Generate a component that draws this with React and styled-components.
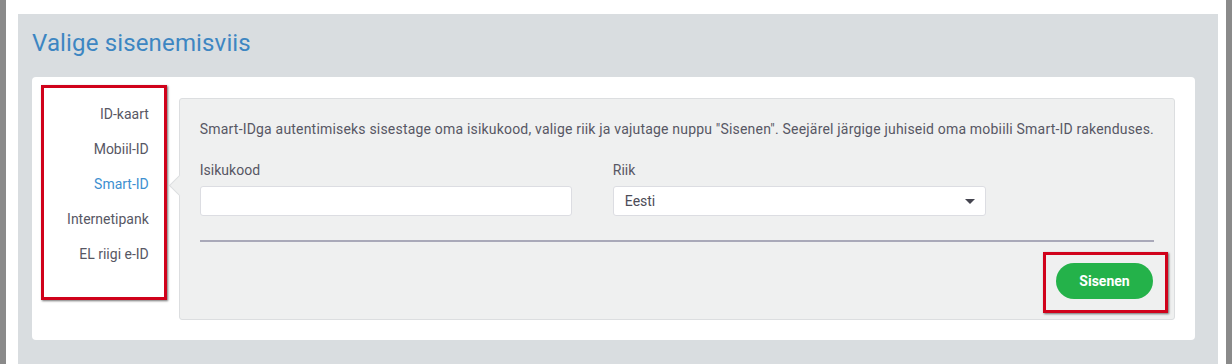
import React, { useState } from 'react'
import styled, { createGlobalStyle } from 'styled-components'

const GlobalStyle = createGlobalStyle`
  html, body {
    margin: 0;
    padding: 0;
    background: #ffffff;
  }
  body {
    font-family: Roboto, "Liberation Sans", Arial, sans-serif;
  }
`

const methods = ['ID-kaart', 'Mobiil-ID', 'Smart-ID', 'Internetipank', 'EL riigi e-ID']

const App = () => {
  const [active, setActive] = useState('Smart-ID')
  const [code, setCode] = useState('')

  return (
    <Frame>
      <GlobalStyle />
      <Stage>
        <Title>Valige sisenemisviis</Title>
        <Card>
          <Nav>
            {methods.map((m) => (
              <NavItem key={m} isActive={m === active} onClick={() => setActive(m)}>
                {m}
              </NavItem>
            ))}
          </Nav>
          <Panel>
            <Notch />
            <Description>
              Smart-IDga autentimiseks sisestage oma isikukood, valige riik ja vajutage nuppu "Sisenen". Seejärel järgige juhiseid oma mobiili Smart-ID rakenduses.
            </Description>
            <Fields>
              <Field>
                <Label>Isikukood</Label>
                <Input value={code} onChange={(e) => setCode(e.target.value)} />
              </Field>
              <Field>
                <Label>Riik</Label>
                <Select>
                  <span>Eesti</span>
                  <Caret />
                </Select>
              </Field>
            </Fields>
            <Divider />
            <Actions>
              <Highlight>
                <Button>Sisenen</Button>
              </Highlight>
            </Actions>
          </Panel>
        </Card>
      </Stage>
    </Frame>
  )
}

export default App

const Frame = styled.div`
  box-sizing: border-box;
  width: 1232px;
  height: 364px;
  overflow: hidden;
  background: #ffffff;
  border-left: 6px solid #8a8a8a;
  border-right: 6px solid #8a8a8a;
  padding: 14px 8px 0 12px;
`

const Stage = styled.div`
  background: #d9dde0;
  height: 100%;
  padding: 15px 23px 0 14px;
  box-sizing: border-box;
`

const Title = styled.h1`
  margin: 0;
  font-size: 24px;
  line-height: 28px;
  letter-spacing: 0.15px;
  font-weight: 400;
  color: #3d86c2;
`

const Card = styled.div`
  margin-top: 20px;
  background: #ffffff;
  border-radius: 4px;
  display: flex;
  align-items: flex-start;
  gap: 12px;
  padding: 8px 20px 20px 9px;
`

const Nav = styled.ul`
  list-style: none;
  margin: 0;
  width: 126px;
  height: 215px;
  box-sizing: border-box;
  padding: 9px 15px 0 0;
  border: 3px solid #d0021b;
  box-shadow: 1px 1px 2px rgba(0, 0, 0, 0.55);
  text-align: right;
`

const NavItem = styled.li`
  font-size: 14px;
  line-height: 35px;
  cursor: pointer;
  color: ${(props) => (props.isActive ? '#3d8fd0' : '#575764')};
`

const Panel = styled.div`
  position: relative;
  flex: 1;
  margin-top: 13px;
  height: 222px;
  box-sizing: border-box;
  background: #eff0f0;
  border: 1px solid #dcdee0;
  border-radius: 3px;
  padding: 22px 20px 0 20px;
`

const Notch = styled.div`
  position: absolute;
  left: -8px;
  top: 79px;
  width: 14px;
  height: 14px;
  background: #eff0f0;
  border-left: 1px solid #dcdee0;
  border-bottom: 1px solid #dcdee0;
  transform: rotate(45deg);
`

const Description = styled.p`
  margin: 0;
  font-size: 14px;
  line-height: 16px;
  letter-spacing: 0.19px;
  color: #575764;
  white-space: nowrap;
`

const Fields = styled.div`
  display: flex;
  gap: 41px;
  margin-top: 25px;
`

const Field = styled.div`
  display: flex;
  flex-direction: column;
  width: 372px;
`

const Label = styled.label`
  font-size: 14px;
  line-height: 16px;
  color: #575764;
  margin-bottom: 8px;
`

const Input = styled.input`
  box-sizing: border-box;
  height: 30px;
  width: 100%;
  background: #ffffff;
  border: 1px solid #dcdde2;
  border-radius: 3px;
  padding: 0 11px;
  font-family: inherit;
  font-size: 14px;
  outline: none;
`

const Select = styled.div`
  box-sizing: border-box;
  height: 30px;
  width: 373px;
  background: #ffffff;
  border: 1px solid #dcdde2;
  border-radius: 3px;
  padding: 0 10px 0 11px;
  display: flex;
  align-items: center;
  justify-content: space-between;
  font-size: 14px;
  color: #4c4c58;
`

const Caret = styled.span`
  width: 0;
  height: 0;
  margin-top: 1px;
  border-left: 5px solid transparent;
  border-right: 5px solid transparent;
  border-top: 5px solid #45454f;
`

const Divider = styled.hr`
  margin: 24px 0 0 0;
  border: 0;
  height: 2px;
  background: #a9a9b9;
`

const Actions = styled.div`
  display: flex;
  justify-content: flex-end;
  margin-top: 10px;
  margin-right: -14px;
`

const Highlight = styled.div`
  border: 3px solid #d0021b;
  box-shadow: 1px 1px 2px rgba(0, 0, 0, 0.55);
  padding: 8px 12px 11px 10px;
`

const Button = styled.button`
  width: 97px;
  height: 36px;
  border: 0;
  border-radius: 18px;
  background: #24b24a;
  color: #ffffff;
  font-family: inherit;
  font-size: 14px;
  font-weight: 700;
  cursor: pointer;
`
